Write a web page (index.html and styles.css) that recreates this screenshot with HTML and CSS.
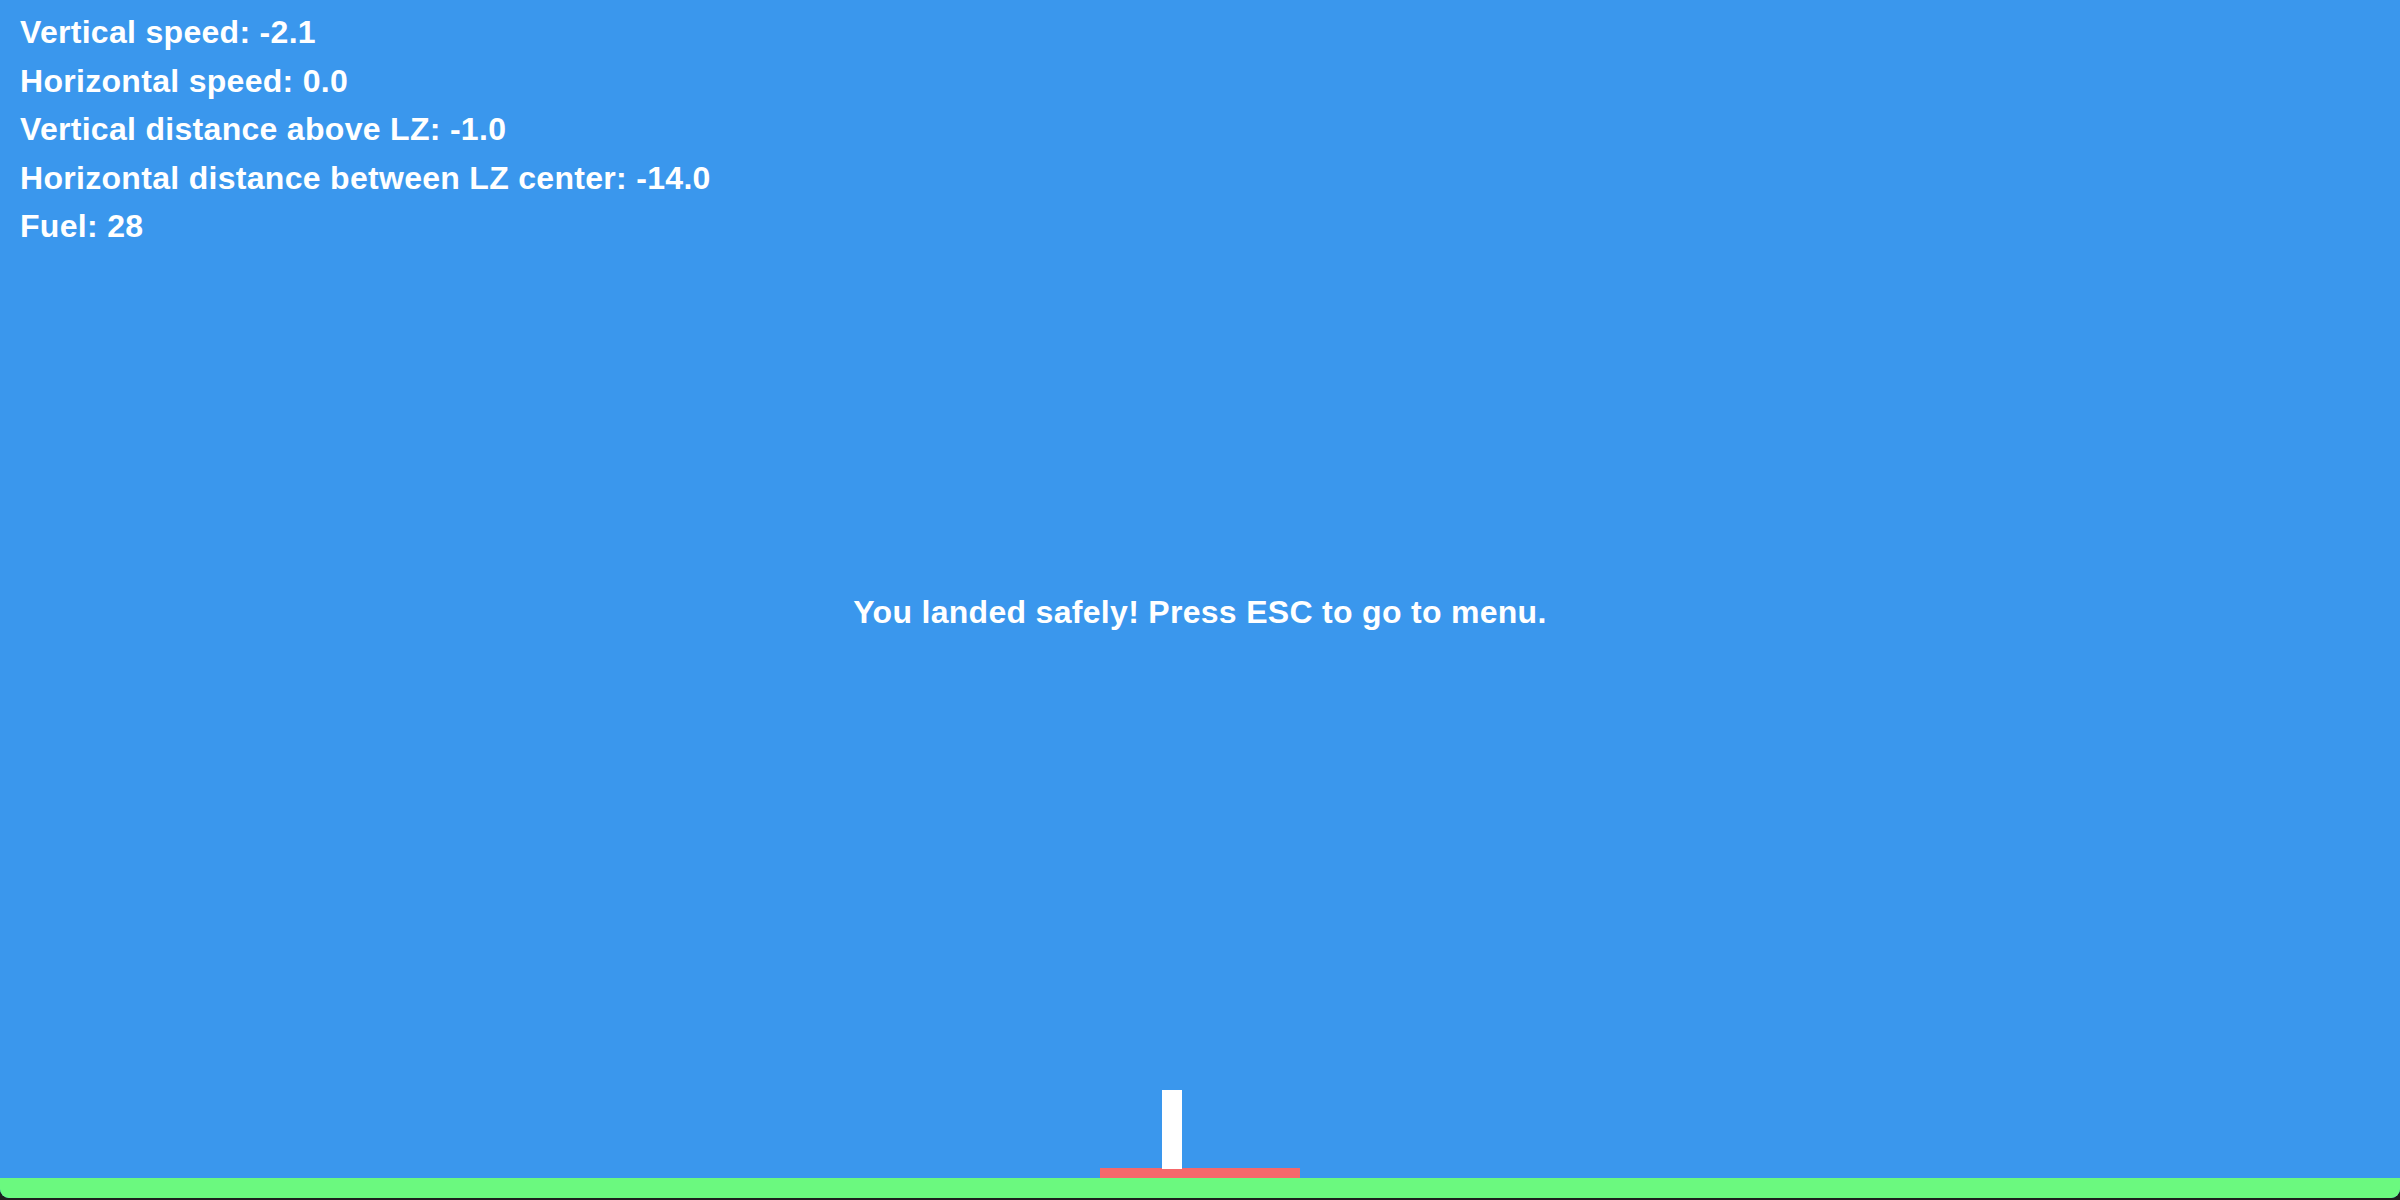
FILE: index.html
```html
<!DOCTYPE html>
<html lang="en">
<head>
<meta charset="utf-8">
<title>Lander</title>
<link rel="stylesheet" href="styles.css">
</head>
<body>
<div class="screen">
  <div class="window">
    <div class="hud">
      <div class="hud-line">Vertical speed: -2.1</div>
      <div class="hud-line">Horizontal speed: 0.0</div>
      <div class="hud-line">Vertical distance above LZ: -1.0</div>
      <div class="hud-line">Horizontal distance between LZ center: -14.0</div>
      <div class="hud-line">Fuel: 28</div>
    </div>
    <div class="message">You landed safely! Press ESC to go to menu.</div>
    <div class="scene">
      <div class="lander"></div>
      <div class="pad"></div>
      <div class="ground"></div>
    </div>
  </div>
</div>
</body>
</html>
```
FILE: styles.css
```css
html, body {
  margin: 0;
  padding: 0;
  background: #1e1e1e;
}

.screen {
  width: 2400px;
  height: 1200px;
  background: #1e1e1e;
  overflow: hidden;
}

.window {
  height: 1198px;
  background: #3a97ed;
  border-radius: 0 0 9px 9px;
  overflow: hidden;
  display: flex;
  flex-direction: column;
  font-family: "Liberation Sans", Arial, sans-serif;
  font-weight: bold;
  font-size: 32px;
  letter-spacing: 0.3px;
  color: #ffffff;
}

.hud {
  padding: 8px 0 0 20px;
}

.hud-line {
  line-height: 48.5px;
  height: 48.5px;
  white-space: nowrap;
}

.message {
  margin-top: 337px;
  line-height: 48px;
  text-align: center;
  white-space: nowrap;
}

.scene {
  margin-top: auto;
  display: flex;
  flex-direction: column;
  align-items: center;
}

.lander {
  width: 20px;
  height: 79px;
  background: #ffffff;
  margin-right: 56px;
  margin-bottom: -1px;
  position: relative;
  z-index: 1;
}

.pad {
  width: 200px;
  height: 10px;
  background: #f5686b;
}

.ground {
  align-self: stretch;
  height: 20px;
  background: #6bf97f;
}
```
